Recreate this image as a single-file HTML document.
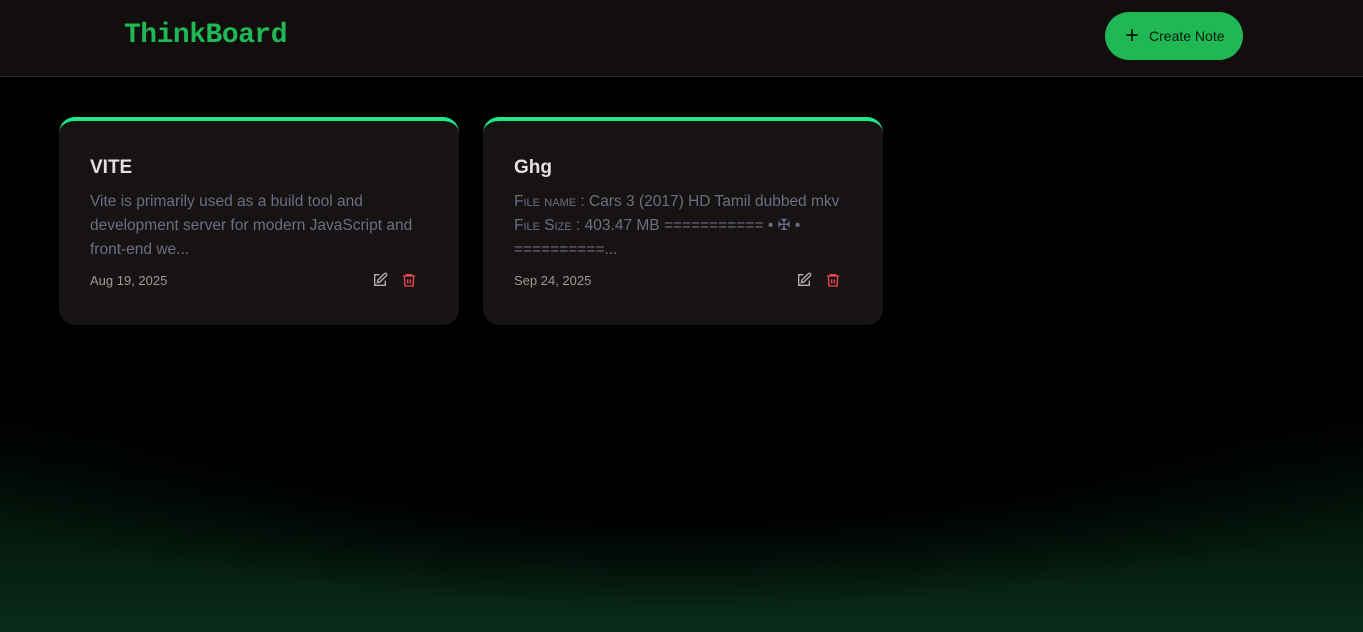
<!DOCTYPE html>
<html><head><style>
*{margin:0;padding:0;box-sizing:border-box}
html,body{width:1363px;height:632px;overflow:hidden}
body{background:#000;font-family:"Liberation Sans",sans-serif;position:relative}
.glow{position:absolute;left:0;width:1363px;top:400px;height:232px;background:radial-gradient(ellipse 62% 90% at 50% 0%,#000 55%,rgba(0,0,0,0) 100%),linear-gradient(to bottom,#000 0%,#041a0e 60%,#0a2c1b 100%)}
header{position:absolute;top:0;left:0;width:1363px;height:77px;background:#110e0d;border-bottom:1px solid #2a2726}
.logo{position:absolute;left:124px;top:20px;font-family:"Liberation Mono",monospace;font-weight:bold;font-size:28px;color:#1fb854;letter-spacing:-0.5px}
.btn{position:absolute;left:1105px;top:12px;width:138px;height:48px;border-radius:24px;background:#1fb854;color:#051a0c;font-size:14px;display:flex;align-items:center;padding-left:20px}
.btn span.p{font-size:24px;margin-right:10px;font-weight:300;line-height:1}
.card{position:absolute;top:117px;width:400px;height:208px;background:#171312;border-radius:16px;border-top:4px solid #1de98b;padding:36px 31px}
.card h2{color:#e3e1df;font-size:19px;font-weight:bold;margin-top:0}
.card p{color:#6b6f84;font-size:15.5px;line-height:24px;margin-top:11px}
.date{position:absolute;left:31px;top:152px;color:#9d9a97;font-size:13px}
.ic{position:absolute;top:151px}
</style></head><body>
<div class="glow"></div>
<header><div class="logo">ThinkBoard</div>
<div class="btn"><span class="p">+</span>Create Note</div></header>
<div class="card" style="left:59px"><h2>VITE</h2><p>Vite is primarily used as a build tool and development server for modern JavaScript and front-end we...</p><div class="date">Aug 19, 2025</div>
<svg class="ic" style="left:313px" width="16" height="16" viewBox="0 0 24 24" fill="none" stroke="#b4b2b0" stroke-width="2"><path d="M11 4H4v16h16v-7"/><path d="M18.5 2.5a2.1 2.1 0 0 1 3 3L12 15l-4 1 1-4z"/></svg>
<svg class="ic" style="left:342px" width="16" height="16" viewBox="0 0 24 24" fill="none" stroke="#f04a5a" stroke-width="2"><path d="M3 6h18M8 6V4h8v2M5 6l1 15h12l1-15M10 11v6M14 11v6"/></svg></div>
<div class="card" style="left:483px"><h2>Ghg</h2><p><span style="font-variant:small-caps">File name</span> : Cars 3 (2017) HD Tamil dubbed mkv <span style="font-variant:small-caps">File Size</span> : 403.47 MB =========== • ✠ • ==========...</p><div class="date">Sep 24, 2025</div>
<svg class="ic" style="left:313px" width="16" height="16" viewBox="0 0 24 24" fill="none" stroke="#b4b2b0" stroke-width="2"><path d="M11 4H4v16h16v-7"/><path d="M18.5 2.5a2.1 2.1 0 0 1 3 3L12 15l-4 1 1-4z"/></svg>
<svg class="ic" style="left:342px" width="16" height="16" viewBox="0 0 24 24" fill="none" stroke="#f04a5a" stroke-width="2"><path d="M3 6h18M8 6V4h8v2M5 6l1 15h12l1-15M10 11v6M14 11v6"/></svg></div>
</body></html>
